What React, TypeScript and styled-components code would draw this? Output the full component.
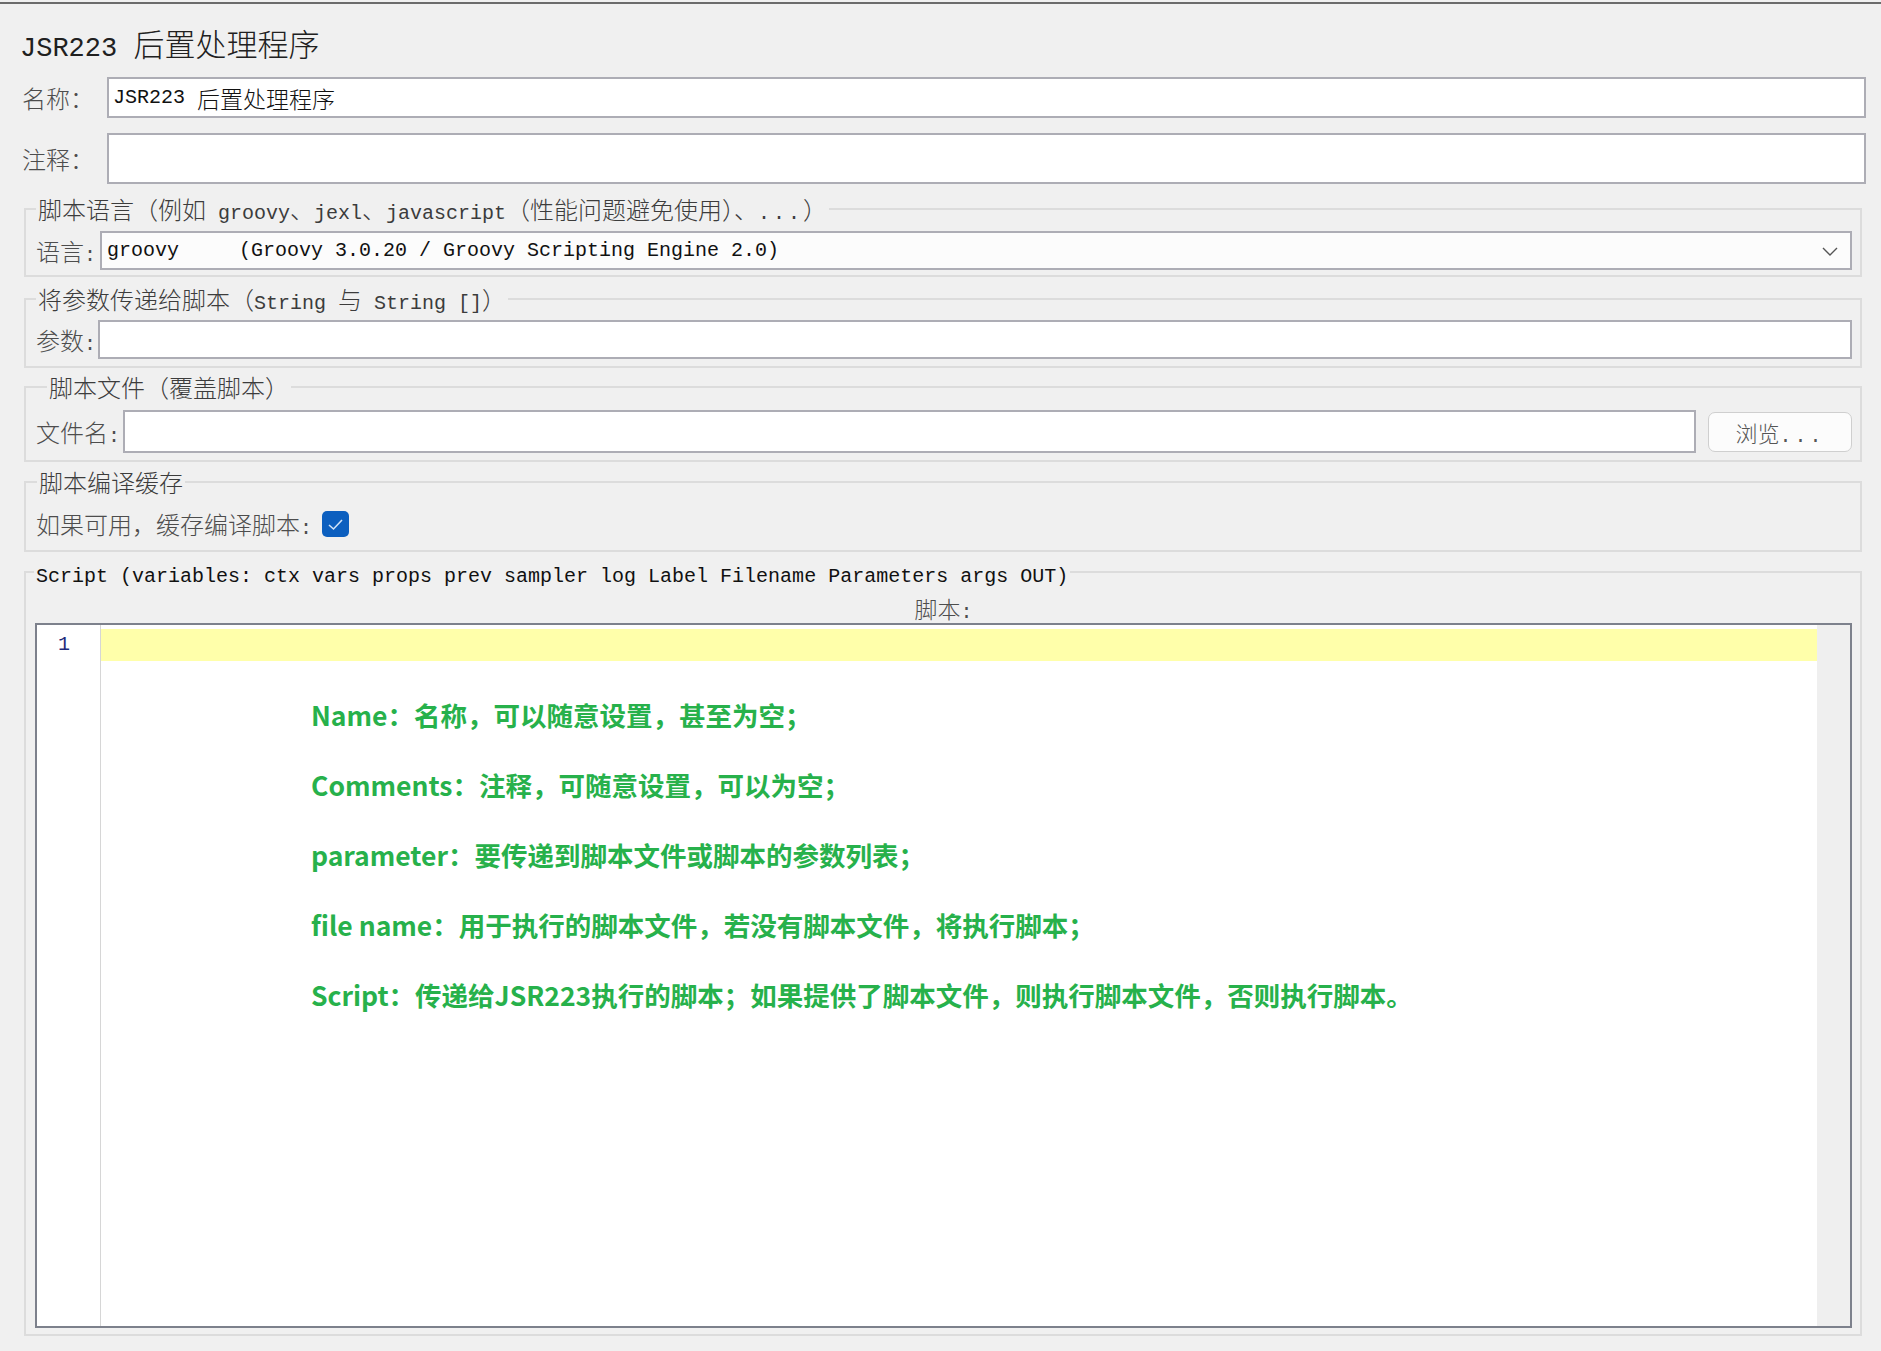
import styled, { createGlobalStyle } from 'styled-components';

const GlobalStyle = createGlobalStyle`
  html, body {
    margin: 0;
    padding: 0;
    background: #f0f0f0;
  }
  body {
    font-family: "Noto Sans CJK SC", "Noto Sans", sans-serif;
    font-weight: 300;
    color: #1e1e1e;
  }
  * {
    box-sizing: border-box;
  }
`;

const Page = styled.div`
  width: 1881px;
  min-height: 1351px;
  padding: 0 15px 0 20px;
  display: flex;
  flex-direction: column;
`;

const TopRule = styled.div`
  height: 2px;
  margin: 2px -15px 0 -20px;
  background: #6b6b6b;
`;

const Title = styled.div`
  height: 40px;
  margin-top: 19px;
  font-size: 31px;
  line-height: 40px;
  color: #202020;
  white-space: nowrap;
`;

const M = styled.span<{ $size?: number }>`
  font-family: "Liberation Mono", monospace;
  font-weight: 400;
  font-size: ${p => p.$size ?? 20}px;
  line-height: 1;
  white-space: pre;
`;

const Dots = styled(M)`
  letter-spacing: 3px;
`;

const Row = styled.div<{ $mt?: number; $gap?: number }>`
  display: flex;
  align-items: center;
  gap: ${p => p.$gap ?? 4}px;
  margin-top: ${p => p.$mt ?? 0}px;
`;

const FieldLabel = styled.span<{ $indent?: number }>`
  flex: none;
  height: 26px;
  margin-left: ${p => p.$indent ?? 0}px;
  font-size: 24px;
  line-height: 26px;
  color: #4d4d4d;
  white-space: nowrap;
`;

const TextBox = styled.div<{ $h: number }>`
  flex: 1;
  height: ${p => p.$h}px;
  display: flex;
  align-items: center;
  padding: 0 4px;
  background: #fff;
  border: 2px solid #adadb5;
  font-size: 23px;
  color: #111;
  white-space: nowrap;
`;

const Combo = styled(TextBox)`
  position: relative;
  background: #fcfcfc;
  padding-left: 5px;
`;

const Chevron = styled.svg`
  position: absolute;
  right: 12px;
  top: 50%;
  margin-top: -4px;
`;

const Group = styled.fieldset<{ $mt: number; $pt: number; $pb: number; $pl?: number }>`
  margin: ${p => p.$mt}px 4px 0 4px;
  padding: ${p => p.$pt}px 8px ${p => p.$pb}px ${p => p.$pl ?? 10}px;
  min-width: 0;
  border: 2px solid #dcdcdc;
`;

const Legend = styled.legend<{ $indent?: number; $dark?: boolean }>`
  height: 24px;
  margin-left: ${p => p.$indent ?? 0}px;
  padding: 0 2px;
  font-size: 24px;
  line-height: 24px;
  color: ${p => (p.$dark ? '#111' : '#3c3c3c')};
  white-space: nowrap;
`;

const BrowseButton = styled.button`
  flex: none;
  width: 144px;
  height: 40px;
  margin-left: 9px;
  border: 1px solid #cfcfcf;
  border-radius: 7px;
  background: #fcfcfc;
  font-family: "Noto Sans CJK SC", sans-serif;
  font-weight: 300;
  font-size: 22px;
  color: #555;
  padding: 0;
`;

const CheckBox = styled.span`
  flex: none;
  width: 27px;
  height: 26px;
  border-radius: 5px;
  background: #0c5fbf;
  display: flex;
  align-items: center;
  justify-content: center;
`;

const Caption = styled.div`
  height: 24px;
  text-align: center;
  font-size: 23px;
  line-height: 24px;
  color: #4d4d4d;
`;

const Editor = styled.div`
  margin-top: 3px;
  height: 705px;
  display: flex;
  background: #fff;
  border: 2px solid #7d818c;
`;

const Gutter = styled.div`
  flex: none;
  width: 64px;
  padding: 4px 0 0 21px;
  border-right: 1px solid #d6d6d6;
`;

const LineNo = styled.div`
  height: 32px;
  line-height: 32px;
  font-family: "Liberation Mono", monospace;
  font-size: 20px;
  color: #1f2a7a;
`;

const TextArea = styled.div`
  flex: 1;
  min-width: 0;
  padding-top: 4px;
`;

const CurrentLine = styled.div`
  height: 32px;
  background: #ffffaa;
`;

const Notes = styled.div`
  margin-top: 19px;
  padding-left: 210px;
`;

const Note = styled.div`
  height: 70px;
  line-height: 70px;
  font-size: 26.5px;
  font-weight: 700;
  color: #27b14b;
  white-space: nowrap;
`;

const ScrollStrip = styled.div`
  flex: none;
  width: 33px;
  background: #efefef;
`;

const notes = [
  'Name：名称，可以随意设置，甚至为空；',
  'Comments：注释，可随意设置，可以为空；',
  'parameter：要传递到脚本文件或脚本的参数列表；',
  'file name：用于执行的脚本文件，若没有脚本文件，将执行脚本；',
  'Script：传递给JSR223执行的脚本；如果提供了脚本文件，则执行脚本文件，否则执行脚本。',
];

export default function App() {
  return (
    <>
      <GlobalStyle />
      <Page>
        <TopRule />
        <Title>
          <M $size={27}>JSR223 </M>后置处理程序
        </Title>

        <Row $mt={14} $gap={13}>
          <FieldLabel $indent={2}>名称：</FieldLabel>
          <TextBox $h={41}>
            <M>JSR223 </M>后置处理程序
          </TextBox>
        </Row>
        <Row $mt={15} $gap={13}>
          <FieldLabel $indent={2}>注释：</FieldLabel>
          <TextBox $h={51} />
        </Row>

        <Group $mt={13} $pt={10} $pb={5}>
          <Legend>
            脚本语言（例如<M> groovy</M>、<M>jexl</M>、<M>javascript</M>（性能问题避免使用）、<Dots>...</Dots>）
          </Legend>
          <Row $gap={4}>
            <FieldLabel>
              语言<M>:</M>
            </FieldLabel>
            <Combo $h={39}>
              <M>groovy     (Groovy 3.0.20 / Groovy Scripting Engine 2.0)</M>
              <Chevron width="16" height="9" viewBox="0 0 16 9">
                <path d="M1 1 L8 8 L15 1" fill="none" stroke="#555" strokeWidth="1.4" />
              </Chevron>
            </Combo>
          </Row>
        </Group>

        <Group $mt={10} $pt={9} $pb={7}>
          <Legend>
            将参数传递给脚本（<M>String </M>与<M> String []</M>）
          </Legend>
          <Row $gap={2}>
            <FieldLabel>
              参数<M>:</M>
            </FieldLabel>
            <TextBox $h={39} />
          </Row>
        </Group>

        <Group $mt={7} $pt={11} $pb={7}>
          <Legend $indent={11}>脚本文件（覆盖脚本）</Legend>
          <Row $gap={3}>
            <FieldLabel>
              文件名<M>:</M>
            </FieldLabel>
            <TextBox $h={43} />
            <BrowseButton>
              浏览<Dots>...</Dots>
            </BrowseButton>
          </Row>
        </Group>

        <Group $mt={8} $pt={17} $pb={13}>
          <Legend $indent={1}>脚本编译缓存</Legend>
          <Row $gap={10}>
            <FieldLabel>
              如果可用，缓存编译脚本<M>:</M>
            </FieldLabel>
            <CheckBox>
              <svg width="17" height="13" viewBox="0 0 17 13">
                <path d="M2 7 L6.5 11 L15 2" fill="none" stroke="#cfe2f7" strokeWidth="1.6" />
              </svg>
            </CheckBox>
          </Row>
        </Group>

        <Group $mt={8} $pt={12} $pb={6} $pl={9}>
          <Legend $dark $indent={-1}>
            <M>Script (variables: ctx vars props prev sampler log Label Filename Parameters args OUT)</M>
          </Legend>
          <Caption>
            脚本<M>:</M>
          </Caption>
          <Editor>
            <Gutter>
              <LineNo>1</LineNo>
            </Gutter>
            <TextArea>
              <CurrentLine />
              <Notes>
                {notes.map(n => (
                  <Note key={n}>{n}</Note>
                ))}
              </Notes>
            </TextArea>
            <ScrollStrip />
          </Editor>
        </Group>
      </Page>
    </>
  );
}
